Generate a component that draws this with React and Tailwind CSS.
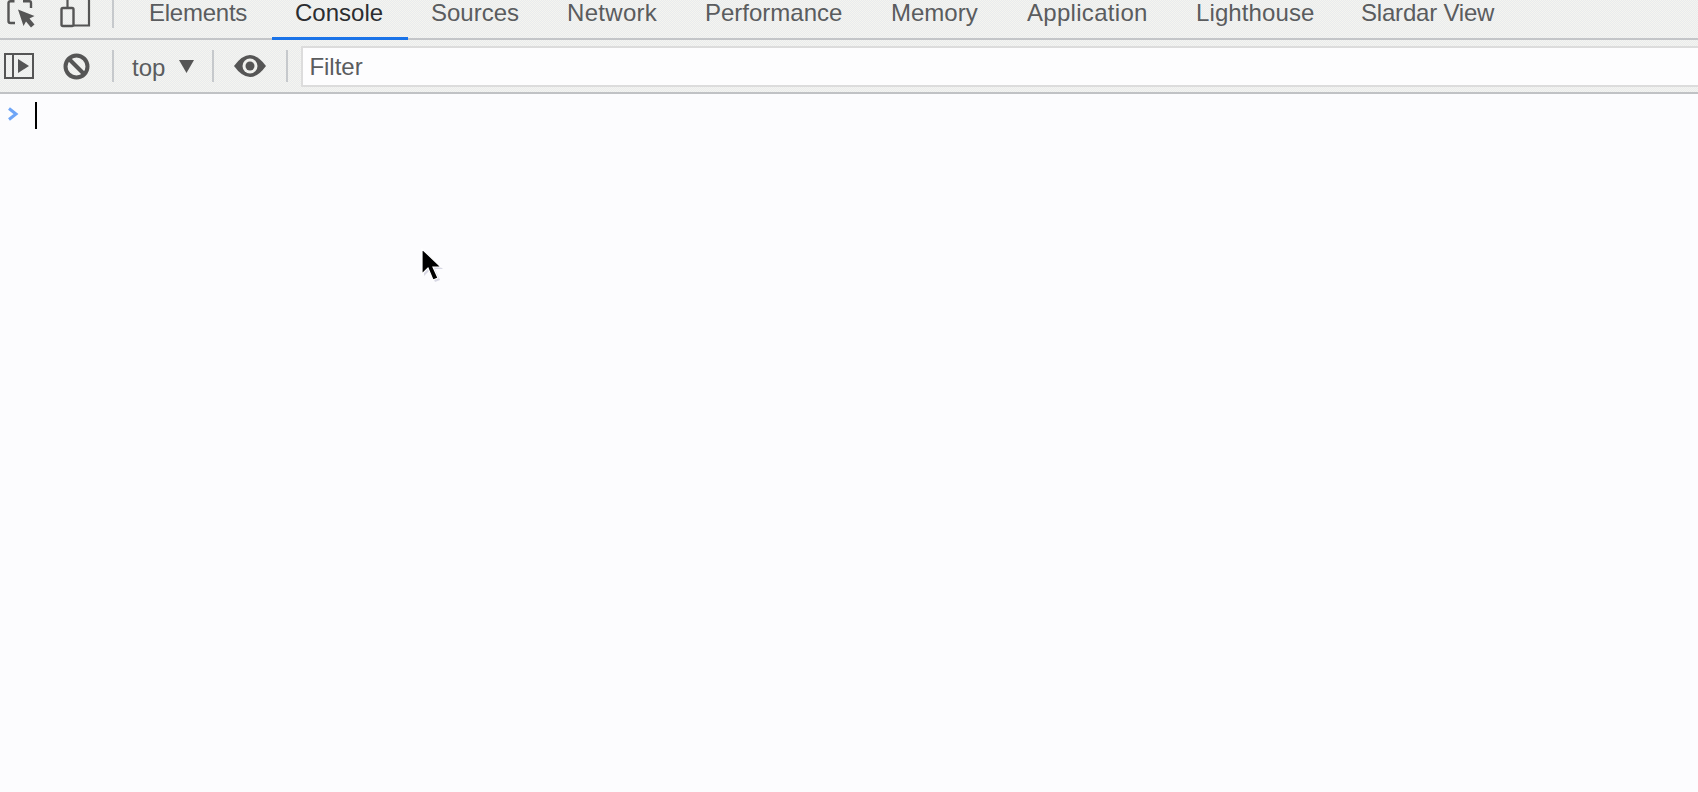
import React from 'react';

// widths and tracking are per tab, the capture's font spacing isn't uniform
const tabs = [
  { name: 'Elements', cls: 'w-[146px] tracking-[-0.25px]' },
  { name: 'Console', cls: 'w-[136px]' },
  { name: 'Sources', cls: 'w-[136px]' },
  { name: 'Network', cls: 'w-[138px] tracking-[0.3px]' },
  { name: 'Performance', cls: 'w-[186px]' },
  { name: 'Memory', cls: 'w-[136px]' },
  { name: 'Application', cls: 'w-[169px] tracking-[0.3px]' },
  { name: 'Lighthouse', cls: 'w-[165px] tracking-[0.1px]' },
  { name: 'Slardar View', cls: 'w-[170px] tracking-[-0.2px]' },
];

const barBg = 'bg-[repeating-conic-gradient(#e9ebee_0_25%,#f5f5ef_0_50%)] bg-[length:2px_2px]';

const Divider = ({ className = '' }) => <div className={`w-[2px] h-[32px] shrink-0 bg-[#c6c9cc] ${className}`} />;

const App = () => {
  return (
    <div className="h-[792px] w-[1698px] overflow-hidden bg-[#fcfcfe] relative" style={{ fontFamily: '"Liberation Sans", Arial, sans-serif' }}>
      {/* Tab bar */}
      <div className={`h-[40px] flex border-b-2 border-[#c3c5c8] ${barBg}`}>
        <div className="flex items-start h-[38px] w-[126px] shrink-0">
          <svg width="36" height="28" viewBox="0 0 36 28" className="ml-[7px] shrink-0" fill="none">
            <path d="M7.5 1.2H3.5Q1.5 1.2 1.5 3V21Q1.5 23 3.5 23H8M16 1.2H22.5Q24 1.2 24 3V8" stroke="#555" strokeWidth="2.4" />
            <path d="M11 9.5L27.5 16L22.5 18.5L27.5 24.5L24 27.5L19 21.5L16.5 26Z" fill="#555" />
          </svg>
          <svg width="32" height="28" viewBox="0 0 32 28" className="ml-[17px] shrink-0" fill="none">
            <path d="M7.5 0V8M29 0V25.5H14" stroke="#555" strokeWidth="2.2" />
            <rect x="1.5" y="8" width="12" height="18" rx="1.5" stroke="#555" strokeWidth="2.4" />
          </svg>
          <Divider className="ml-[20px] -mt-[4px]" />
        </div>
        {tabs.map((t) => (
          <div
            key={t.name}
            className={`h-[40px] pl-[23px] text-[24px] leading-[26px] whitespace-nowrap ${t.cls} ${t.name === 'Console' ? 'text-[#2b2d30] border-b-[3px] border-[#1a73e8]' : 'text-[#5a5c5e]'}`}
          >
            {t.name}
          </div>
        ))}
      </div>

      {/* Console toolbar */}
      <div className={`h-[54px] flex items-center border-b-2 border-[#c0c2c5] ${barBg}`}>
        <svg width="30" height="26" viewBox="0 0 30 26" className="ml-[4px] shrink-0" fill="none">
          <rect x="1" y="1" width="28" height="24" stroke="#555" strokeWidth="2" />
          <path d="M9 1V25" stroke="#555" strokeWidth="2" />
          <path d="M14 6L25 13L14 20Z" fill="#555" />
        </svg>
        <svg width="27" height="27" viewBox="0 0 27 27" className="ml-[29px] shrink-0" fill="none">
          <circle cx="13.5" cy="13.5" r="11" stroke="#555" strokeWidth="4" />
          <path d="M6 6L21 21" stroke="#555" strokeWidth="4" />
        </svg>
        <Divider className="ml-[22px]" />
        <span className="ml-[18px] pt-[3px] text-[24px] text-[#5a5c5e]">top</span>
        <svg width="15" height="13" viewBox="0 0 15 13" className="ml-[14px] shrink-0">
          <path d="M0 0H15L7.5 13Z" fill="#555" />
        </svg>
        <Divider className="ml-[18px]" />
        <svg width="32" height="22" viewBox="0 0 32 22" className="ml-[20px] shrink-0">
          <path d="M0 11Q8 0 16 0Q24 0 32 11Q24 22 16 22Q8 22 0 11Z" fill="#555" />
          <circle cx="16" cy="11" r="7.5" fill="#f0f1ee" />
          <circle cx="16" cy="11" r="4.5" fill="#555" />
        </svg>
        <Divider className="ml-[20px]" />
        <div className="ml-[13px] flex-1 h-[41px] bg-[#fdfdfe] border-2 border-r-0 border-[#dcdcdc] pl-[6px] pt-[2px] flex items-center text-[24px] text-[#5a5c5e]">
          Filter
        </div>
      </div>

      {/* Prompt line */}
      <div className="flex items-start pt-[8px]">
        <svg width="12" height="14" viewBox="0 0 12 14" className="ml-[7px] mt-[5px] shrink-0" fill="none">
          <path d="M2 1.5L9 7L2 12.5" stroke="#6ea5f7" strokeWidth="3" />
        </svg>
        <div className="ml-[16px] w-[2px] h-[27px] bg-black" />
      </div>

      {/* Mouse cursor */}
      <svg width="24" height="36" viewBox="0 0 24 36" className="absolute left-[421px] top-[248px]">
        <path d="M3 3V28L9 22L14 34L19 32L14 21H22Z" fill="#d8d8e4" />
        <path d="M1 1V26L7 20L12 32L17 30L12 19H20Z" fill="#000" stroke="#fff" strokeWidth="1.2" />
      </svg>
    </div>
  );
};

export default App;
